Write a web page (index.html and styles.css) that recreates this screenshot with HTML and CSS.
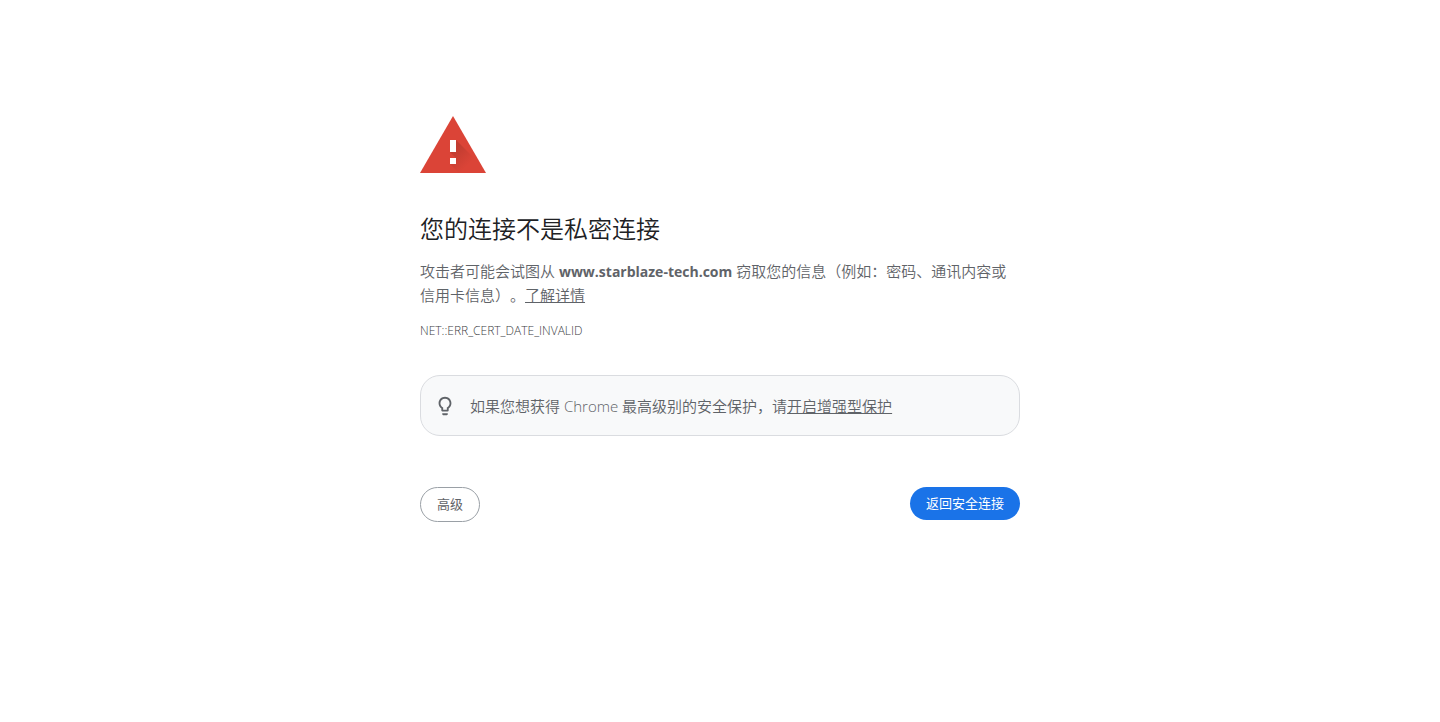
FILE: index.html
```html
<!DOCTYPE html>
<html lang="zh-CN">
<head>
    <meta charset="UTF-8">
    <meta name="viewport" content="width=device-width, initial-scale=1.0">
    <title>隐私设置错误</title>
    <link rel="stylesheet" href="styles.css">
</head>
<body>
    <main class="interstitial">
        <svg class="warning-icon" viewBox="0 0 72 72" aria-hidden="true">
            <defs>
                <linearGradient id="shadow" gradientUnits="userSpaceOnUse" x1="33" y1="44" x2="47" y2="58">
                    <stop offset="0" stop-color="#872b22" stop-opacity="0.3"/>
                    <stop offset="1" stop-color="#872b22" stop-opacity="0"/>
                </linearGradient>
            </defs>
            <path fill="#db4437" d="M0 65 33 8l33 57z"/>
            <path fill="url(#shadow)" d="M36 32 59 55l6 10H39L30 56l6-6-6-6 6-4z"/>
            <path fill="#fff" d="M30 32h6v12h-6zM30 50h6v6h-6z"/>
        </svg>
        <h1>您的连接不是私密连接</h1>
        <p>攻击者可能会试图从 <strong>www.starblaze-tech.com</strong> 窃取您的信息（例如：密码、通讯内容或信用卡信息）。<a href="#">了解详情</a></p>
        <div class="error-code">NET::ERR_CERT_DATE_INVALID</div>
        <div class="promo">
            <svg class="bulb-icon" viewBox="0 0 24 24" aria-hidden="true">
                <path fill="#5f6368" d="M9 21c0 .5.4 1 1 1h4c.6 0 1-.5 1-1v-1H9v1zm3-19C8.1 2 5 5.100 5 9c0 2.400 1.200 4.500 3 5.700V17c0 .5.4 1 1 1h6c.6 0 1-.5 1-1v-2.300c1.800-1.300 3-3.400 3-5.700 0-3.900-3.100-7-7-7zm2.900 11.100-.9.600V16h-4v-2.300l-.9-.600C7.800 12.200 7 10.600 7 9c0-2.800 2.200-5 5-5s5 2.200 5 5c0 1.600-.8 3.200-2.100 4.100z"/>
            </svg>
            <div>如果您想获得 Chrome 最高级别的安全保护，请<a href="#">开启增强型保护</a></div>
        </div>
        <div class="buttons">
            <button type="button" class="secondary">高级</button>
            <button type="button" class="primary">返回安全连接</button>
        </div>
    </main>
</body>
</html>
```
FILE: styles.css
```css
body {
    margin: 0;
    background: #fff;
    color: #5f6368;
    font-family: "Open Sans", "Noto Sans CJK SC", sans-serif;
    font-size: 15px;
    font-weight: 350;
    line-height: 24px;
    text-spacing-trim: space-all;
}
.interstitial {
    box-sizing: border-box;
    max-width: 600px;
    margin: 15vh auto 0;
}
.warning-icon {
    display: block;
    width: 72px;
    height: 72px;
    margin-bottom: 35px;
}
h1 {
    margin: 0 0 16px;
    color: #202124;
    font-size: 24px;
    font-weight: 350;
    line-height: 28px;
}
p {
    margin: 0 0 12px;
}
strong {
    font-size: 14px;
    font-weight: 700;
    line-height: 1;
}
a {
    color: inherit;
    text-decoration: underline;
}
.error-code {
    color: #3c4043;
    font-size: 12px;
    font-weight: 300;
}
.promo {
    display: flex;
    align-items: center;
    margin-top: 32px;
    padding: 18px 13px 17px;
    border: 1px solid #dadce0;
    border-radius: 20px;
    background: #f8f9fa;
}
.bulb-icon {
    flex: none;
    width: 22px;
    height: 22px;
    margin-right: 14px;
}
.buttons {
    display: flex;
    justify-content: space-between;
    align-items: flex-start;
    margin-top: 51px;
}
button {
    padding: 8px 16px;
    border: 0;
    border-radius: 20px;
    font-family: inherit;
    font-size: 13px;
    line-height: 17px;
    cursor: pointer;
}
.secondary {
    border: 1px solid #9aa0a6;
    background: #fff;
    color: #5f6368;
}
.primary {
    background: #1a73e8;
    color: #fff;
}
```
